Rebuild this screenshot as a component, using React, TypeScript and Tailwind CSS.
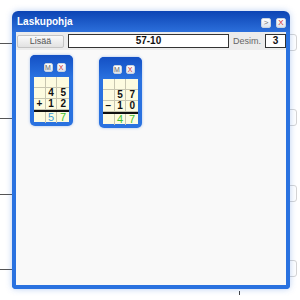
import React from "react";

type Cell = { v?: string; c?: string };

const cards: { rows: Cell[][]; result: Cell[]; top: string }[] = [
  {
    top: "mt-0",
    rows: [
      [{}, {}, {}],
      [{}, { v: "4" }, { v: "5" }],
      [{ v: "+" }, { v: "1" }, { v: "2" }],
    ],
    result: [{}, { v: "5", c: "text-[#3f9bd6]" }, { v: "7", c: "text-[#3fbf2f]" }],
  },
  {
    top: "mt-[2px]",
    rows: [
      [{}, {}, {}],
      [{}, { v: "5" }, { v: "7" }],
      [{ v: "−" }, { v: "1" }, { v: "0" }],
    ],
    result: [{}, { v: "4", c: "text-[#3fbf2f]" }, { v: "7", c: "text-[#3fbf2f]" }],
  },
];

function SmallBtn({ label, red }: { label: string; red?: boolean }) {
  return (
    <div
      className={`w-[9px] h-[9px] rounded-[2px] border border-[#c9d3e0] bg-gradient-to-b from-white to-[#dde4ee] flex items-center justify-center text-[7px] leading-none ${
        red ? "text-[#d42a2a]" : "text-[#666]"
      }`}
    >
      {label}
    </div>
  );
}

function Card({ rows, result, top }: (typeof cards)[number]) {
  return (
    <div className={`${top} w-[43px] rounded-[5px] bg-[#2a72e0] p-[4px] pt-0 shadow-[0_0_3px_rgba(40,110,220,0.4)]`}>
      <div className="h-[22px] -mx-[4px] rounded-t-[5px] bg-gradient-to-b from-[#1450c4] to-[#2a72e0] flex items-start justify-center gap-[4px] pt-[8px] pl-[6px]">
        <SmallBtn label="M" />
        <SmallBtn label="X" red />
      </div>
      <div className="w-[35px] bg-[#fdfbe0]">
        {rows.map((r, i) => (
          <div key={i} className="grid grid-cols-3 h-[11px] border-b border-[#c8c6b0]">
            {r.map((c, j) => (
              <div
                key={j}
                className={`flex items-center justify-center text-[10px] font-bold leading-none text-[#111] ${
                  j < 2 ? "border-r border-[#c8c6b0]" : ""
                }`}
              >
                {c.v}
              </div>
            ))}
          </div>
        ))}
        <div className="h-[2px] bg-[#111]" />
        <div className="grid grid-cols-3 h-[10px]">
          {result.map((c, j) => (
            <div
              key={j}
              className={`flex items-center justify-center text-[11px] leading-none ${c.c ?? ""} ${
                j < 2 ? "border-r border-[#c8c6b0]" : ""
              }`}
            >
              {c.v}
            </div>
          ))}
        </div>
      </div>
    </div>
  );
}

export default function App() {
  const leftLines = ["top-[43px]", "top-[118px]", "top-[194px]", "top-[269px]"];
  const rightBoxes = ["top-[34px]", "top-[109px]", "top-[185px]", "top-[260px]"];

  return (
    <div className="relative w-[300px] h-[300px] bg-white overflow-hidden font-['Liberation_Sans',Arial,sans-serif]">
      {leftLines.map((t) => (
        <div key={t} className={`absolute left-0 ${t} w-[14px] h-px bg-[#555]`} />
      ))}
      {rightBoxes.map((t) => (
        <div
          key={t}
          className={`absolute left-[286px] ${t} w-[11px] h-[17px] rounded-r-[3px] border border-[#d4d4d4] bg-white`}
        />
      ))}
      <div className="absolute left-[239px] top-[291px] w-px h-[4px] bg-[#444]" />

      {/* window */}
      <div className="absolute left-[12px] top-[11px] w-[278px] h-[278px] flex flex-col rounded-t-[6px] rounded-b-[4px] shadow-[0_0_6px_rgba(60,120,220,0.35)]">
        <div className="h-[21px] shrink-0 rounded-t-[6px] bg-gradient-to-b from-[#0c44b4] to-[#2c6fdb] flex items-center justify-between pl-[5px] pr-[4px]">
          <span className="text-white font-bold text-[10px] leading-none">Laskupohja</span>
          <div className="flex gap-[5px] pt-[2px]">
            <div className="w-[10px] h-[10px] rounded-[2px] border border-[#c9d3e0] bg-gradient-to-b from-white to-[#dde4ee] flex items-center justify-center text-[8px] text-[#777] leading-none">
              &gt;
            </div>
            <div className="w-[10px] h-[10px] rounded-[2px] border border-[#c9d3e0] bg-gradient-to-b from-white to-[#dde4ee] flex items-center justify-center text-[8px] text-[#d42a2a] leading-none">
              X
            </div>
          </div>
        </div>
        <div className="flex-1 flex flex-col border-x-4 border-b-4 border-[#2a72e0] rounded-b-[4px] bg-[#f9f9f9]">
          <div className="h-[18px] shrink-0 bg-[#ececec] flex items-center pl-[1px] pr-0 gap-[4px]">
            <div className="w-[47px] h-[13px] rounded-[2px] border border-[#c4c4c4] bg-gradient-to-b from-[#fafafa] to-[#e2e2e2] flex items-center justify-center text-[9px] text-[#555] leading-none">
              Lisää
            </div>
            <div className="w-[162px] h-[14px] border border-[#333] bg-white flex items-center justify-center text-[10px] font-bold text-[#111] leading-none">
              57-10
            </div>
            <span className="text-[9px] text-[#666] leading-none">Desim.</span>
            <div className="w-[21px] h-[14px] border border-[#333] bg-white flex items-center justify-center text-[10px] font-bold text-[#111] leading-none">
              3
            </div>
          </div>
          <div className="flex items-start gap-[26px] pl-[14px] pt-[5px]">
            {cards.map((c, i) => (
              <Card key={i} {...c} />
            ))}
          </div>
        </div>
      </div>
    </div>
  );
}
